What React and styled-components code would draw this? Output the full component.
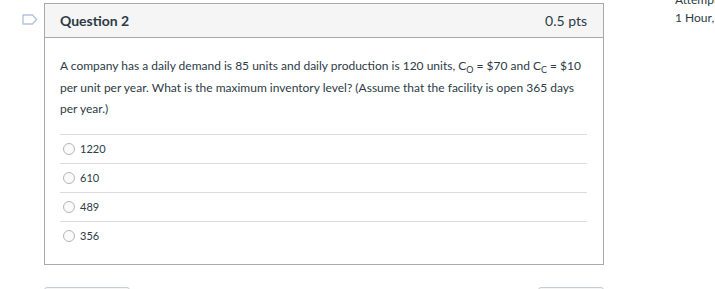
import React from 'react'
import styled, { createGlobalStyle } from 'styled-components'

const GlobalStyle = createGlobalStyle`
    html, body {
        margin: 0;
        padding: 0;
        overflow: hidden;
        background: #fff;
    }
    body {
        font-family: Lato, 'Liberation Sans', sans-serif;
        color: #2d3b45;
    }
`

const answers = ['1220', '610', '489', '356']

const App = () => {
    return (
        <Page>
            <GlobalStyle />
            <Gutter>
                <Flag width="16" height="11" viewBox="0 0 16 11">
                    <path
                        d="M1 1 H10.5 L14.5 5.5 L10.5 10 H1 Z"
                        fill="none"
                        stroke="#b4c4da"
                        strokeWidth="1.4"
                        strokeLinejoin="round"
                    />
                </Flag>
            </Gutter>
            <Main>
                <Question>
                    <Header>
                        <Title>Question 2</Title>
                        <Points>0.5 pts</Points>
                    </Header>
                    <Body>
                        <Text>
                            A company has a daily demand is 85 units and daily production is
                            120 units, C<sub>O</sub> = $70 and C<sub>C</sub> = $10 per unit
                            per year. What is the maximum inventory level? (Assume that the
                            facility is open 365 days per year.)
                        </Text>
                        <Answers>
                            {answers.map((a) => (
                                <Answer key={a}>
                                    <Radio />
                                    <span>{a}</span>
                                </Answer>
                            ))}
                        </Answers>
                    </Body>
                </Question>
                <Nav>
                    <NavButton $width={84} />
                    <NavButton $width={64} />
                </Nav>
            </Main>
            <Sidebar>
                <span>Attempt due</span>
                <span>1 Hour, 12 Minutes</span>
            </Sidebar>
        </Page>
    )
}

const Page = styled.div`
    display: flex;
    align-items: flex-start;
    padding-top: 3px;
    width: 900px;
`

const Gutter = styled.div`
    flex: 0 0 44px;
    padding: 11px 0 0 22px;
    box-sizing: border-box;
`

const Flag = styled.svg`
    display: block;
`

const Main = styled.div`
    flex: 0 0 560px;
`

const Question = styled.div`
    border: 1px solid #a9a9a9;
`

const Header = styled.div`
    display: flex;
    align-items: center;
    justify-content: space-between;
    height: 33px;
    padding: 0 16px 0 15px;
    background: #f5f5f5;
    border-bottom: 1px solid #a9a9a9;
`

const Title = styled.div`
    font-size: 14px;
    font-weight: 700;
`

const Points = styled.div`
    font-size: 14px;
`

const Body = styled.div`
    padding: 17px 16px 14px 15px;
`

const Text = styled.div`
    font-size: 12px;
    line-height: 21.5px;

    sub {
        font-size: 9px;
        line-height: 0;
        vertical-align: -3px;
    }
`

const Answers = styled.div`
    margin-top: 14px;
`

const Answer = styled.label`
    display: flex;
    align-items: center;
    gap: 5px;
    height: 28px;
    border-top: 1px solid #dcdcdc;
    font-size: 11px;
`

const Radio = styled.span`
    width: 10px;
    height: 10px;
    margin-left: 3px;
    border: 1px solid #b5b5b5;
    border-radius: 50%;
    background: #fafafa;
`

const Nav = styled.div`
    display: flex;
    justify-content: space-between;
    margin-top: 22px;
`

const NavButton = styled.div`
    width: ${(props) => props.$width}px;
    height: 36px;
    border: 1px solid #c7cdd1;
    border-radius: 3px;
    background: #f5f5f5;
`

const Sidebar = styled.div`
    display: flex;
    flex-direction: column;
    margin: -12px 0 0 71px;
    font-size: 12px;
    line-height: 18px;
    white-space: nowrap;
`

export default App
